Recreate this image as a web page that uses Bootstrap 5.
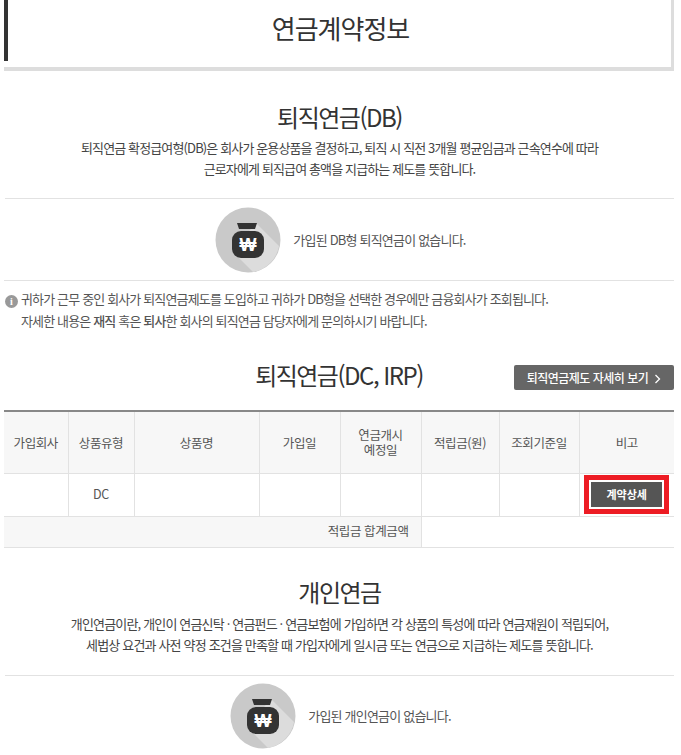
<!DOCTYPE html>
<html lang="ko">
<head>
    <meta charset="UTF-8">
    <title>연금계약정보</title>
    <link href="https://cdn.jsdelivr.net/npm/bootstrap@5.3.0/dist/css/bootstrap.min.css" rel="stylesheet">
    <style>
        body { font-family: "Noto Sans CJK KR", "Noto Sans", sans-serif; color: #444; background: #fff; font-size: 12px; overflow: hidden; height: 755px; }
        .wrap { margin: 0 7px 0 4px; }
        .page-head { height: 71px; padding-left: 6px; border-right: 3px solid #ddd; border-bottom: 4px solid #ddd; position: relative; }
        .page-head::before { content: ""; position: absolute; left: 0; top: 0; width: 4px; height: 61px; background: #333; }
        .page-head h1 { font-size: 26px; line-height: 56px; margin: 0; font-weight: 400; color: #333; letter-spacing: -1px; }
        .sec-title { font-size: 24px; line-height: 34px; font-weight: 400; color: #333; letter-spacing: -1.5px; margin: 0; }
        .sec-text { font-size: 13px; line-height: 21px; letter-spacing: -.87px; color: #444; margin: 0; }
        .empty-row { border-top: 1px solid #e2e2e2; height: 82px; gap: 12px; padding-left: 2px; }
        .empty-row span { font-size: 13px; letter-spacing: -.8px; color: #555; }
        .note { font-size: 13px; line-height: 22px; letter-spacing: -.85px; color: #555; border-top: 1px solid #e2e2e2; padding-top: 7px; }
        .note-line { padding-left: 17px; }
        .note-line b { font-weight: 500; }
        .info-dot { width: 13px; height: 13px; background: #999; color: #fff; border-radius: 50%; font: 700 10px/13px "Liberation Serif", serif; text-align: center; margin-right: 3px; margin-left: -16px; display: inline-block; letter-spacing: 0; vertical-align: -1px; }
        .dc-head { height: 52px; margin-top: 26px; position: relative; }
        .dc-more { position: absolute; right: 0; top: 7px; width: 160px; height: 25px; background: #666; color: #fff; border-radius: 2px; font-size: 12px; font-weight: 500; letter-spacing: -.5px; border: 0; padding: 0; }
        .dc-more svg { margin-left: 6px; vertical-align: -1px; }
        .pension-tbl { table-layout: fixed; width: 670px; border-collapse: collapse; border-top: 2px solid #888; font-size: 12.5px; letter-spacing: -.4px; margin: 0; }
        .pension-tbl th, .pension-tbl td { border: 1px solid #e2e2e2; border-top: 0; text-align: center; vertical-align: middle; padding: 0; color: #555; font-weight: 400; }
        .pension-tbl tr > :first-child { border-left: 0; }
        .pension-tbl tr > :last-child { border-right: 0; }
        .pension-tbl thead th { background: #f7f7f7; height: 62px; line-height: 15px; }
        .pension-tbl .data-row td { height: 43px; }
        .pension-tbl .sum-row td { height: 31px; }
        .pension-tbl .sum-label { background: #f7f7f7 !important; text-align: right; padding-right: 12px; }
        .col-a { width: 64px; } .col-b { width: 66px; } .col-c { width: 125px; } .col-d { width: 81px; }
        .col-e { width: 81px; } .col-f { width: 78px; } .col-g { width: 80px; } .col-h { width: 95px; }
        .detail-mark { display: block; width: 85px; height: 39px; border: 5px solid #ed1c24; margin: 0 auto; padding: 2px; }
        .detail-btn { display: block; width: 100%; height: 100%; background: #555; color: #fff; border: 0; font-size: 11px; font-weight: 700; letter-spacing: 0; padding: 0; }
        .sec-block { padding-left: 1px; }
        .sec-db { padding-top: 29px; }
        .sec-db .sec-title + .sec-text { margin-top: 3px; }
        .sec-db .empty-row { margin-top: 19px; }
        .sec-personal { margin-top: 27px; height: 87px; }
        .sec-personal .sec-text { letter-spacing: -.83px; }
        .sec-personal .sec-title + .sec-text { margin-top: 4px; }
        .sec-personal .empty-row { margin-top: 20px; }
    </style>
</head>
<body>
<div class="wrap">

    <div class="page-head text-center">
        <h1>연금계약정보</h1>
    </div>

    <section class="text-center sec-block sec-db">
        <h2 class="sec-title">퇴직연금(DB)</h2>
        <p class="sec-text">퇴직연금 확정급여형(DB)은 회사가 운용상품을 결정하고, 퇴직 시 직전 3개월 평균임금과 근속연수에 따라</p>
        <p class="sec-text">근로자에게 퇴직급여 총액을 지급하는 제도를 뜻합니다.</p>
        <div class="empty-row d-flex align-items-center justify-content-center">
            <svg width="66" height="66" viewBox="0 0 66 66">
                <circle cx="33" cy="33" r="32.5" fill="#c9c9c9"/>
                <path d="M41 16 L64 39 A32 32 0 0 1 38 65 L17 44 Z" fill="#dcdcdc"/>
                <path d="M22 16 h20 l-2 6 h-16 z" fill="#333"/>
                <rect x="17" y="24" width="32" height="27" rx="9" fill="#333"/>
                <text x="33" y="44" text-anchor="middle" font-size="18" font-weight="700" fill="#fff" font-family="Liberation Sans, sans-serif">₩</text>
            </svg>
            <span>가입된 DB형 퇴직연금이 없습니다.</span>
        </div>
    </section>

    <div class="note">
        <div class="note-line"><span class="info-dot">i</span>귀하가 근무 중인 회사가 퇴직연금제도를 도입하고 귀하가 DB형을 선택한 경우에만 금융회사가 조회됩니다.</div>
        <div class="note-line">자세한 내용은 <b>재직</b> 혹은 <b>퇴사</b>한 회사의 퇴직연금 담당자에게 문의하시기 바랍니다.</div>
    </div>

    <div class="dc-head text-center">
        <h2 class="sec-title">퇴직연금(DC, IRP)</h2>
        <button class="dc-more" type="button">퇴직연금제도 자세히 보기<svg width="7" height="10" viewBox="0 0 7 10"><path d="M1.5 1 L5.5 5 L1.5 9" fill="none" stroke="#fff" stroke-width="1.3"/></svg></button>
    </div>

    <table class="pension-tbl">
        <colgroup>
            <col class="col-a"><col class="col-b"><col class="col-c"><col class="col-d">
            <col class="col-e"><col class="col-f"><col class="col-g"><col class="col-h">
        </colgroup>
        <thead>
            <tr>
                <th>가입회사</th><th>상품유형</th><th>상품명</th><th>가입일</th>
                <th>연금개시<br>예정일</th><th>적립금(원)</th><th>조회기준일</th><th>비고</th>
            </tr>
        </thead>
        <tbody>
            <tr class="data-row">
                <td></td><td>DC</td><td></td><td></td><td></td><td></td><td></td>
                <td><span class="detail-mark"><button class="detail-btn" type="button">계약상세</button></span></td>
            </tr>
            <tr class="sum-row">
                <td class="sum-label" colspan="5">적립금 합계금액</td>
                <td colspan="3"></td>
            </tr>
        </tbody>
    </table>

    <section class="text-center sec-block sec-personal">
        <h2 class="sec-title">개인연금</h2>
        <p class="sec-text">개인연금이란, 개인이 연금신탁 · 연금펀드 · 연금보험에 가입하면 각 상품의 특성에 따라 연금재원이 적립되어,</p>
        <p class="sec-text">세법상 요건과 사전 약정 조건을 만족할 때 가입자에게 일시금 또는 연금으로 지급하는 제도를 뜻합니다.</p>
        <div class="empty-row d-flex align-items-center justify-content-center">
            <svg width="66" height="66" viewBox="0 0 66 66">
                <circle cx="33" cy="33" r="32.5" fill="#c9c9c9"/>
                <path d="M41 16 L64 39 A32 32 0 0 1 38 65 L17 44 Z" fill="#dcdcdc"/>
                <path d="M22 16 h20 l-2 6 h-16 z" fill="#333"/>
                <rect x="17" y="24" width="32" height="27" rx="9" fill="#333"/>
                <text x="33" y="44" text-anchor="middle" font-size="18" font-weight="700" fill="#fff" font-family="Liberation Sans, sans-serif">₩</text>
            </svg>
            <span>가입된 개인연금이 없습니다.</span>
        </div>
    </section>

</div>
<script src="https://cdn.jsdelivr.net/npm/bootstrap@5.3.0/dist/js/bootstrap.bundle.min.js"></script>
</body>
</html>
